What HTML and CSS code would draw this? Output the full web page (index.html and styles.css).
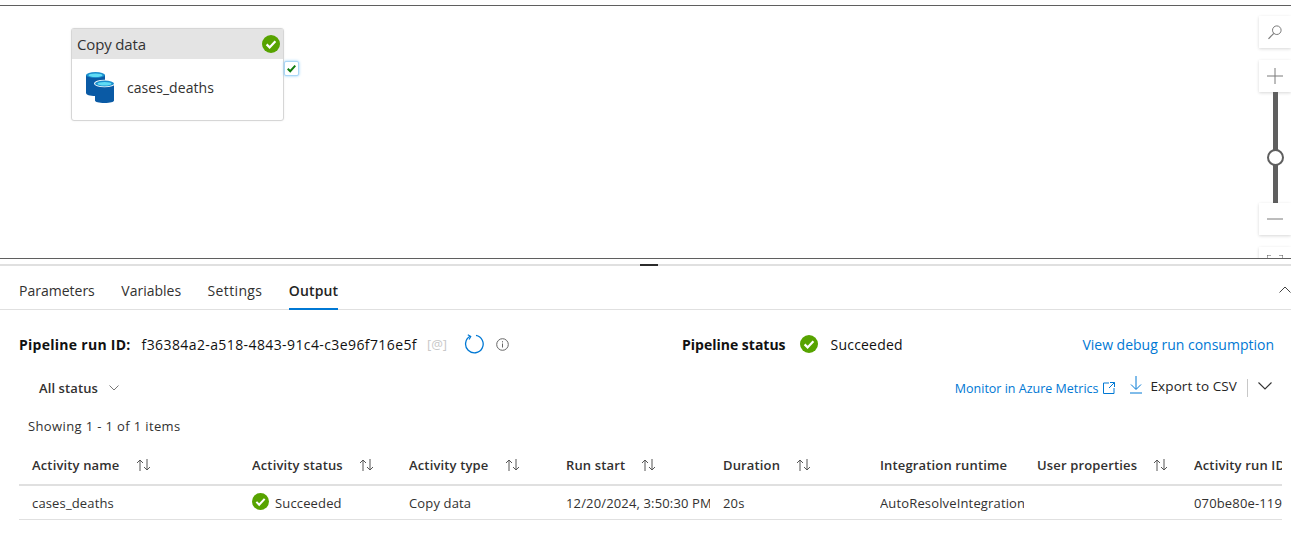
FILE: index.html
```html
<!DOCTYPE html>
<html lang="en">
<head>
<meta charset="utf-8">
<title>Pipeline run</title>
<link rel="stylesheet" href="styles.css">
</head>
<body>
<section class="canvas">
  <div class="node">
    <div class="node-head">
      <span>Copy data</span>
      <svg class="ok node-ok" viewBox="0 0 18 18"><circle cx="9" cy="9" r="9" fill="#57a300"/><path d="M4.600 9.400l3 3 5.800-6.200" fill="none" stroke="#fff" stroke-width="2.200"/></svg>
    </div>
    <div class="node-body">
      <svg class="db" viewBox="0 0 28 31">
        <path d="M0 3v18c0 1.700 3.700 3 9.500 3s9.500-1.300 9.500-3V3z" fill="#0a5aa5"/>
        <ellipse cx="9.500" cy="3" rx="9.500" ry="3" fill="#1c8fce"/>
        <ellipse cx="9.500" cy="3.300" rx="7" ry="1.800" fill="#5fdcf5"/>
        <path d="M9 11.500v17c0 1.400 3.800 2.500 9.500 2.500s9.500-1.100 9.500-2.500v-17z" fill="#0a5aa5"/>
        <ellipse cx="18.500" cy="11.500" rx="10.500" ry="3.800" fill="#fff"/>
        <ellipse cx="18.500" cy="11.500" rx="9.500" ry="3" fill="#1c8fce"/>
        <ellipse cx="18.500" cy="11.800" rx="7" ry="1.800" fill="#5fdcf5"/>
      </svg>
      <span class="node-name">cases_deaths</span>
    </div>
    <div class="node-port"><svg viewBox="0 0 10 10"><path d="M.8 5.200l2.800 2.800L9.200 1.800" fill="none" stroke="#107c10" stroke-width="2.200"/></svg></div>
  </div>
  <div class="zoom">
    <div class="zoom-btn search"><svg viewBox="0 0 16 16"><circle cx="9.800" cy="6.200" r="4.300" fill="none" stroke="#7a7a7a" stroke-width="1"/><path d="M6.800 9.300L1.500 14.800" stroke="#7a7a7a" stroke-width="1.200"/></svg></div>
    <div class="zoom-btn plus"><svg viewBox="0 0 16 16"><path d="M0 8h16M8 0v16" stroke="#7a7a7a" stroke-width="1"/></svg></div>
    <div class="track"><span class="thumb"></span></div>
    <div class="zoom-btn minus"><svg viewBox="0 0 16 16"><path d="M0 8h16" stroke="#7a7a7a" stroke-width="1"/></svg></div>
    <div class="zoom-btn fit"><svg viewBox="0 0 16 16"><path d="M0 4V0h4M12 0h4v4M0 12v4h4M12 16h4v-4" fill="none" stroke="#555" stroke-width="1"/></svg></div>
  </div>
</section>

<div class="splitter"><span class="handle"></span></div>

<section class="panel">
  <nav class="tabs">
    <a class="tab">Parameters</a>
    <a class="tab">Variables</a>
    <a class="tab wide">Settings</a>
    <a class="tab active">Output</a>
    <svg class="collapse" viewBox="0 0 12 7"><path d="M.5 6.500L6 1l5.500 5.500" fill="none" stroke="#444" stroke-width="1"/></svg>
  </nav>

  <div class="run-row">
    <div class="run-id">
      <b>Pipeline run ID:</b>
      <span class="id-value">f36384a2-a518-4843-91c4-c3e96f716e5f</span>
      <span class="at">[@]</span>
      <svg class="refresh" viewBox="0 0 20 20"><path d="M6.200 2.300A8.800 8.800 0 1 0 12 1.400" fill="none" stroke="#0078d4" stroke-width="1.300"/><path d="M3.800 .8l3 1.700-1.700 3" fill="none" stroke="#0078d4" stroke-width="1.100"/></svg>
      <svg class="info" viewBox="0 0 13 13"><circle cx="6.500" cy="6.500" r="5.800" fill="none" stroke="#666" stroke-width="1"/><path d="M6.500 5.500v4M6.500 3.200v1.200" stroke="#666" stroke-width="1"/></svg>
    </div>
    <div class="run-status">
      <b>Pipeline status</b>
      <svg class="ok" viewBox="0 0 18 18"><circle cx="9" cy="9" r="9" fill="#57a300"/><path d="M4.600 9.400l3 3 5.800-6.200" fill="none" stroke="#fff" stroke-width="2.200"/></svg>
      <span class="status-text">Succeeded</span>
    </div>
    <a class="link consumption">View debug run consumption</a>
  </div>

  <div class="filter-row">
    <div class="filter"><b>All status</b>
      <svg class="chev" viewBox="0 0 10 6"><path d="M.5.500L5 5 9.500.500" fill="none" stroke="#777" stroke-width="1"/></svg>
    </div>
    <div class="actions">
      <a class="link metrics">Monitor in Azure Metrics</a>
      <svg class="ext" viewBox="0 0 12 12"><path d="M6 1H.5v10.500H11V6M7 .5h4.500V5M11.500.5L6 6" fill="none" stroke="#0078d4" stroke-width="1"/></svg>
      <svg class="down" viewBox="0 0 12 18"><path d="M6 0v13M1 8.500L6 13.500l5-5M0 17h12" fill="none" stroke="#0078d4" stroke-width="1"/></svg>
      <span class="export">Export to CSV</span>
      <span class="sep"></span>
      <svg class="chev-dark" viewBox="0 0 14 8"><path d="M.5.500L7 7 13.500.500" fill="none" stroke="#333" stroke-width="1.100"/></svg>
    </div>
  </div>

  <p class="count">Showing 1 - 1 of 1 items</p>

  <div class="table">
    <div class="row head">
      <div class="cell first">Activity name <svg class="sort" viewBox="0 0 16 12"><path d="M4 12V1M1 4l3-3 3 3M11 0v11M8 8l3 3 3-3" fill="none" stroke="#555" stroke-width="1"/></svg></div>
      <div class="cell">Activity status <svg class="sort" viewBox="0 0 16 12"><path d="M4 12V1M1 4l3-3 3 3M11 0v11M8 8l3 3 3-3" fill="none" stroke="#555" stroke-width="1"/></svg></div>
      <div class="cell">Activity type <svg class="sort" viewBox="0 0 16 12"><path d="M4 12V1M1 4l3-3 3 3M11 0v11M8 8l3 3 3-3" fill="none" stroke="#555" stroke-width="1"/></svg></div>
      <div class="cell">Run start <svg class="sort" viewBox="0 0 16 12"><path d="M4 12V1M1 4l3-3 3 3M11 0v11M8 8l3 3 3-3" fill="none" stroke="#555" stroke-width="1"/></svg></div>
      <div class="cell">Duration <svg class="sort" viewBox="0 0 16 12"><path d="M4 12V1M1 4l3-3 3 3M11 0v11M8 8l3 3 3-3" fill="none" stroke="#555" stroke-width="1"/></svg></div>
      <div class="cell">Integration runtime</div>
      <div class="cell">User properties <svg class="sort" viewBox="0 0 16 12"><path d="M4 12V1M1 4l3-3 3 3M11 0v11M8 8l3 3 3-3" fill="none" stroke="#555" stroke-width="1"/></svg></div>
      <div class="cell">Activity run ID</div>
    </div>
    <div class="row body">
      <div class="cell first">cases_deaths</div>
      <div class="cell"><svg class="ok row-ok" viewBox="0 0 18 18"><circle cx="9" cy="9" r="9" fill="#57a300"/><path d="M4.600 9.400l3 3 5.800-6.200" fill="none" stroke="#fff" stroke-width="2.200"/></svg>Succeeded</div>
      <div class="cell">Copy data</div>
      <div class="cell">12/20/2024, 3:50:30 PM</div>
      <div class="cell">20s</div>
      <div class="cell">AutoResolveIntegrationRuntime</div>
      <div class="cell"></div>
      <div class="cell">070be80e-1196-4d3a</div>
    </div>
  </div>
</section>
</body>
</html>
```
FILE: styles.css
```css
* { box-sizing: border-box; }
html, body { margin: 0; height: 543px; overflow: hidden; background: #fff; }
body {
  font-family: "Open Sans", "Liberation Sans", sans-serif;
  font-size: 14px;
  color: #323130;
}
b { font-weight: 700; }
svg { display: block; flex: none; }

.canvas {
  position: relative;
  height: 254px;
  margin-top: 5px;
  border-top: 1px solid #5f5f5f;
  border-bottom: 1px solid #5f5f5f;
  overflow: hidden;
}

.node {
  position: absolute;
  left: 71px;
  top: 22px;
  width: 213px;
  height: 93px;
  background: #fff;
  border: 1px solid #d6d6d6;
  border-radius: 3px;
  box-shadow: 0 0 2px rgba(0,0,0,.08);
}
.node-head {
  display: flex;
  align-items: center;
  justify-content: space-between;
  height: 30px;
  padding: 0 3px 0 5px;
  background: #e4e4e4;
  font-size: 15px;
  letter-spacing: -.15px;
  color: #333;
}
.ok { width: 18px; height: 18px; }
.node-body { display: flex; align-items: center; height: 61px; padding: 0 0 4px 14px; }
.db { width: 28px; height: 31px; }
.node-name { margin-left: 13px; letter-spacing: .05px; }
.node-port {
  position: absolute;
  left: 212px;
  top: 32px;
  width: 15px;
  height: 15px;
  padding: 2px;
  background: #fff;
  border: 1px solid #a9d6f7;
  border-radius: 2px;
  box-shadow: 0 0 3px #8ccbf5;
}

.zoom { position: absolute; right: 0; top: 10px; width: 32px; height: 250px; }
.zoom-btn {
  position: absolute;
  left: 0;
  width: 32px;
  height: 32px;
  display: flex;
  align-items: center;
  justify-content: center;
  background: #fff;
  box-shadow: 0 1px 3px rgba(0,0,0,.16);
}
.zoom-btn svg { width: 16px; height: 16px; }
.search { top: 0; }
.plus { top: 44px; }
.minus { top: 187px; }
.fit { top: 231px; }
.track {
  position: absolute;
  left: 14px;
  top: 76px;
  width: 5px;
  height: 111px;
  background: #5f5f5f;
}
.thumb {
  position: absolute;
  left: -6px;
  top: 57px;
  width: 17px;
  height: 17px;
  background: #fff;
  border: 2px solid #5f5f5f;
  border-radius: 50%;
}

.splitter {
  position: relative;
  height: 2px;
  margin-top: 5px;
  background: #e0e0e0;
}
.handle {
  position: absolute;
  left: 640px;
  top: 0;
  width: 18px;
  height: 2px;
  background: #2b2b2b;
}

.panel { padding-left: 19px; }

.tabs {
  position: relative;
  display: flex;
  gap: 26.500px;
  height: 44px;
  margin-left: -19px;
  padding-left: 19px;
  border-bottom: 1px solid #e0e0e0;
}
.tab {
  display: flex;
  align-items: center;
  height: 44px;
  padding-top: 4px;
  color: #323130;
}
.tab.wide { letter-spacing: .35px; }
.tab.active {
  font-weight: 600;
  letter-spacing: .15px;
  border-bottom: 2px solid #0078d4;
  padding-top: 6px;
  color: #252423;
}
.collapse {
  position: absolute;
  right: 0;
  top: 20px;
  width: 12px;
  height: 7px;
}

.run-row {
  position: relative;
  display: flex;
  align-items: center;
  height: 68px;
  color: #111;
}
.run-id { display: flex; align-items: center; width: 663px; }
.run-id b { letter-spacing: .27px; }
.id-value { margin-left: 11px; letter-spacing: .4px; }
.at { margin-left: 10px; font-size: 13px; color: #c8c8c8; }
.refresh { width: 20px; height: 20px; margin-left: 17px; }
.info { width: 13px; height: 13px; margin-left: 12px; }
.run-status { display: flex; align-items: center; }
.run-status .ok { margin-left: 14px; }
.status-text { margin-left: 13px; letter-spacing: .2px; }
.link { color: #0078d4; }
.consumption { position: absolute; right: 17px; top: 25px; }

.filter-row {
  display: flex;
  align-items: center;
  justify-content: space-between;
  height: 18px;
  margin: 1px 0 20px;
}
.filter { display: flex; align-items: center; padding-left: 20px; font-size: 13px; letter-spacing: .1px; }
.filter b { font-weight: 600; color: #323130; }
.chev { width: 10px; height: 6px; margin-left: 11px; }
.actions { display: flex; align-items: center; padding-right: 19px; }
.metrics { font-size: 12.500px; }
.ext { width: 12px; height: 12px; margin-left: 4px; }
.down { width: 12px; height: 18px; margin-left: 15px; margin-top: -6px; }
.export { margin-left: 9px; margin-top: -4px; font-size: 13.500px; letter-spacing: .1px; color: #252423; }
.sep { width: 1px; height: 18px; margin-left: 10px; background: #c8c8c8; }
.chev-dark { width: 14px; height: 8px; margin-left: 10px; margin-top: -4px; }

.count { margin: 0 0 0 9px; font-size: 13px; line-height: 18px; letter-spacing: .37px; }

.table { margin: 11px 9px 0 0; overflow: hidden; }
.row { display: grid; grid-template-columns: 233px repeat(7, 157px); white-space: nowrap; }
.cell {
  display: flex;
  align-items: center;
  overflow: hidden;
  font-size: 13px;
  letter-spacing: .15px;
}
.first { padding-left: 13px; }
.head {
  height: 40px;
  border-bottom: 2px solid #e0e0e0;
  font-weight: 600;
}
.sort { width: 16px; height: 12px; margin-left: 16px; }
.body { height: 34px; border-bottom: 1px solid #e0e0e0; }
.body .cell { margin-right: 13px; }
.row-ok { width: 17px; height: 17px; margin-right: 6px; margin-top: -2px; }
```
